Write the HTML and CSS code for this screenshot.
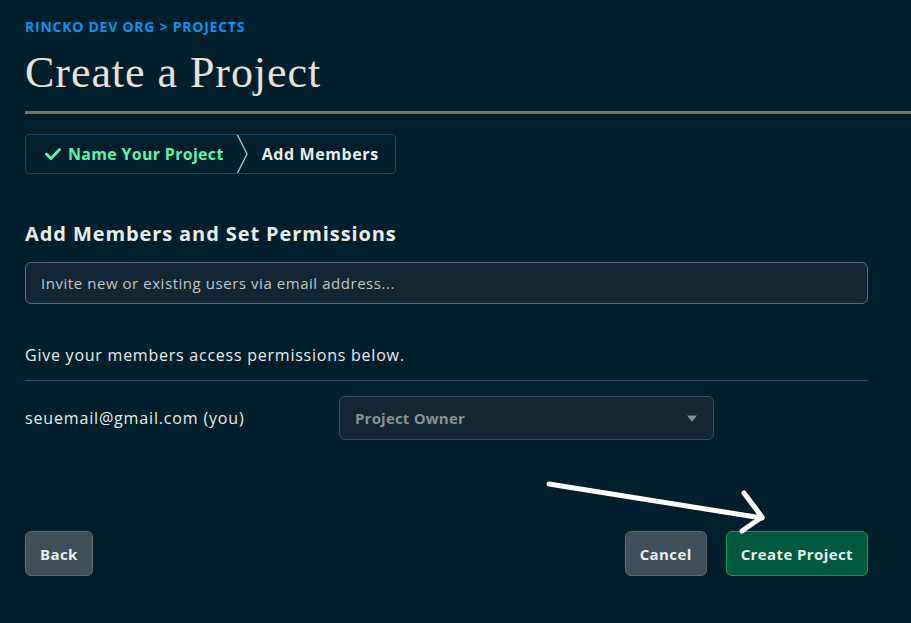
FILE: index.html
```html
<!DOCTYPE html>
<html lang="en">
<head>
<meta charset="utf-8">
<title>Create a Project</title>
<link rel="stylesheet" href="styles.css">
</head>
<body>
<div class="page">
  <div class="crumbs">RINCKO DEV ORG &gt; PROJECTS</div>
  <h1 class="title">Create a Project</h1>
  <div class="rule"></div>

  <div class="content">
    <div class="stepper">
      <div class="step done">
        <svg class="check" width="16" height="14" viewBox="0 0 16 14"><path d="M1.5 7.2 L6 11.5 L14.5 2.5" fill="none" stroke="#5df3aa" stroke-width="3" stroke-linecap="round" stroke-linejoin="round"/></svg>
        <span>Name Your Project</span>
      </div>
      <svg class="chev" width="12" height="40" viewBox="0 0 12 40"><path d="M1 0 L11 20 L1 40" fill="none" stroke="#b8c4c2" stroke-width="1.3"/></svg>
      <div class="step current">Add Members</div>
    </div>

    <h2 class="heading">Add Members and Set Permissions</h2>
    <div class="input">Invite new or existing users via email address...</div>

    <p class="desc">Give your members access permissions below.</p>
    <div class="divider"></div>

    <div class="member">
      <div class="email">seuemail@gmail.com (you)</div>
      <div class="select">
        <span>Project Owner</span>
        <svg width="12" height="7" viewBox="0 0 12 7"><path d="M1 0.5 H11 L6 6.5 Z" fill="#889397"/></svg>
      </div>
    </div>

    <div class="actions">
      <button class="btn">Back</button>
      <div class="right">
        <button class="btn">Cancel</button>
        <button class="btn primary">Create Project</button>
      </div>
    </div>
  </div>

  <svg class="arrow" width="911" height="623" viewBox="0 0 911 623">
    <path d="M549 484 L762 518" fill="none" stroke="#ffffff" stroke-width="5" stroke-linecap="round"/>
    <path d="M744 493 L762 517 L742 531" fill="none" stroke="#ffffff" stroke-width="5" stroke-linecap="round" stroke-linejoin="round"/>
  </svg>
</div>
</body>
</html>
```

FILE: styles.css
```css
* { box-sizing: border-box; }
html, body {
  margin: 0;
  padding: 0;
  background: #001e2b;
  height: 100%;
}
body {
  font-family: "Open Sans", "Noto Sans", sans-serif;
  color: #e8edeb;
  overflow: hidden;
}
.page {
  position: relative;
  width: 911px;
  height: 623px;
  padding-top: 18px;
}
.crumbs {
  margin-left: 25px;
  color: #0498ec;
  font-weight: 700;
  font-size: 14px;
  line-height: 17px;
  letter-spacing: 0.75px;
}
.title {
  margin: 14px 0 0 25px;
  font-family: "Liberation Serif", "DejaVu Serif", serif;
  font-weight: 400;
  font-size: 44px;
  line-height: 48px;
  color: #e6e1da;
  letter-spacing: 0.95px;
}
.rule {
  margin: 14px 0 0 25px;
  height: 3px;
  background: #7b7265;
}
.content {
  padding: 0 43px 0 25px;
}
.stepper {
  margin-top: 20px;
  width: 371px;
  height: 40px;
  border: 1px solid #0e4c6a;
  border-radius: 4px;
  display: flex;
  align-items: center;
  overflow: hidden;
}
.step {
  font-weight: 700;
  font-size: 16px;
  display: flex;
  align-items: center;
  gap: 7px;
  letter-spacing: 0.3px;
}
.step.done {
  color: #5df3aa;
  padding-left: 19px;
  padding-right: 12px;
}
.step.current {
  color: #e8edeb;
  padding-left: 14px;
  letter-spacing: 0.6px;
}
.chev { display: block; flex: none; margin-top: -1px; }
.heading {
  margin: 47px 0 0;
  font-size: 20px;
  line-height: 26px;
  font-weight: 700;
  color: #e8edeb;
  letter-spacing: 0.9px;
}
.input {
  margin-top: 15px;
  height: 42px;
  border: 1px solid #5c6c75;
  border-radius: 6px;
  background: #112733;
  color: #c1c7c6;
  font-size: 15px;
  letter-spacing: 0.55px;
  display: flex;
  align-items: center;
  padding-left: 15px;
}
.desc {
  margin: 41px 0 0;
  font-size: 16px;
  line-height: 20px;
  color: #e8edeb;
  letter-spacing: 0.76px;
}
.divider {
  margin-top: 15px;
  height: 1px;
  background: #0f5677;
}
.member {
  margin-top: 15px;
  display: flex;
  align-items: center;
}
.email {
  width: 314px;
  font-size: 16px;
  color: #e8edeb;
  letter-spacing: 0.84px;
}
.select {
  width: 375px;
  height: 44px;
  border: 1px solid #3d4f58;
  border-radius: 6px;
  background: #112733;
  display: flex;
  align-items: center;
  justify-content: space-between;
  padding: 0 15px;
  color: #889397;
  font-weight: 700;
  font-size: 15px;
  letter-spacing: 0.2px;
}
.actions {
  margin-top: 91px;
  display: flex;
  justify-content: space-between;
}
.right { display: flex; gap: 19px; }
.btn {
  height: 45px;
  border-radius: 6px;
  border: 1px solid #5c6c75;
  background: #3d4f58;
  color: #e8edeb;
  font-family: "Open Sans", "Noto Sans", sans-serif;
  font-weight: 700;
  font-size: 15px;
  letter-spacing: 0.4px;
  padding: 0 14px;
}
.btn.primary {
  background: #00593f;
  border-color: #00a35c;
}
.arrow {
  position: absolute;
  left: 0;
  top: 0;
  pointer-events: none;
}
```
